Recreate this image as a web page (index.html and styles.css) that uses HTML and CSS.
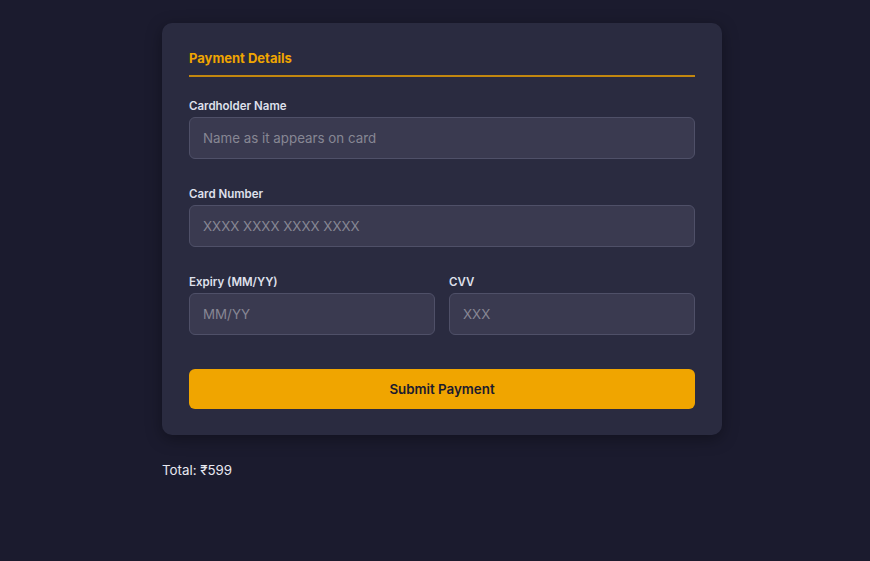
FILE: index.html
```html
<!DOCTYPE html>
<html>
<head>
<meta charset="utf-8">
<link rel="stylesheet" href="styles.css">
</head>
<body>
<main class="page">
  <form class="card">
    <h2 class="card-title">Payment Details</h2>
    <div class="field">
      <label class="label">Cardholder Name</label>
      <input class="input" type="text" placeholder="Name as it appears on card">
    </div>
    <div class="field">
      <label class="label">Card Number</label>
      <input class="input" type="text" placeholder="XXXX XXXX XXXX XXXX">
    </div>
    <div class="row">
      <div class="field">
        <label class="label">Expiry (MM/YY)</label>
        <input class="input" type="text" placeholder="MM/YY">
      </div>
      <div class="field">
        <label class="label">CVV</label>
        <input class="input" type="text" placeholder="XXX">
      </div>
    </div>
    <button class="submit" type="button">Submit Payment</button>
  </form>
  <p class="total">Total: ₹599</p>
</main>
</body>
</html>
```
FILE: styles.css
```css
* { box-sizing: border-box; }
html, body {
  margin: 0;
  background: #1b1b2e;
  font-family: Inter, "Noto Sans", sans-serif;
  color: #e4e4ee;
}
.page {
  padding: 23px 0 0 162px;
}
.card {
  width: 560px;
  background: #2a2b40;
  border-radius: 10px;
  padding: 27px 27px 26px;
  box-shadow: 0 4px 16px rgba(0,0,0,0.35);
}
.card-title {
  margin: 0 0 21px;
  font-size: 13px;
  font-weight: 700;
  line-height: 16px;
  color: #f0a500;
  padding-bottom: 9px;
  border-bottom: 2px solid #c2870f;
}
.field {
  display: flex;
  flex-direction: column;
  margin-bottom: 27px;
}
.label {
  font-size: 11.5px;
  font-weight: 600;
  line-height: 16px;
  color: #dfe0ec;
  margin-bottom: 3px;
}
.input {
  height: 42px;
  background: #3a3a50;
  border: 1px solid #4f5068;
  border-radius: 6px;
  padding: 0 13px;
  font-family: inherit;
  font-size: 13.33px;
  color: #e4e4ee;
  outline: none;
}
.input::placeholder { color: #878794; }
.row {
  display: grid;
  grid-template-columns: 1fr 1fr;
  gap: 14px;
}
.row .field { margin-bottom: 34px; }
.submit {
  display: block;
  width: 100%;
  height: 40px;
  border: none;
  border-radius: 6px;
  background: #f0a500;
  color: #1b1b2e;
  font-family: inherit;
  font-size: 13.33px;
  font-weight: 600;
}
.total {
  margin: 27px 0 0;
  font-size: 13.33px;
  line-height: 17px;
  color: #e8e8f0;
}
```
